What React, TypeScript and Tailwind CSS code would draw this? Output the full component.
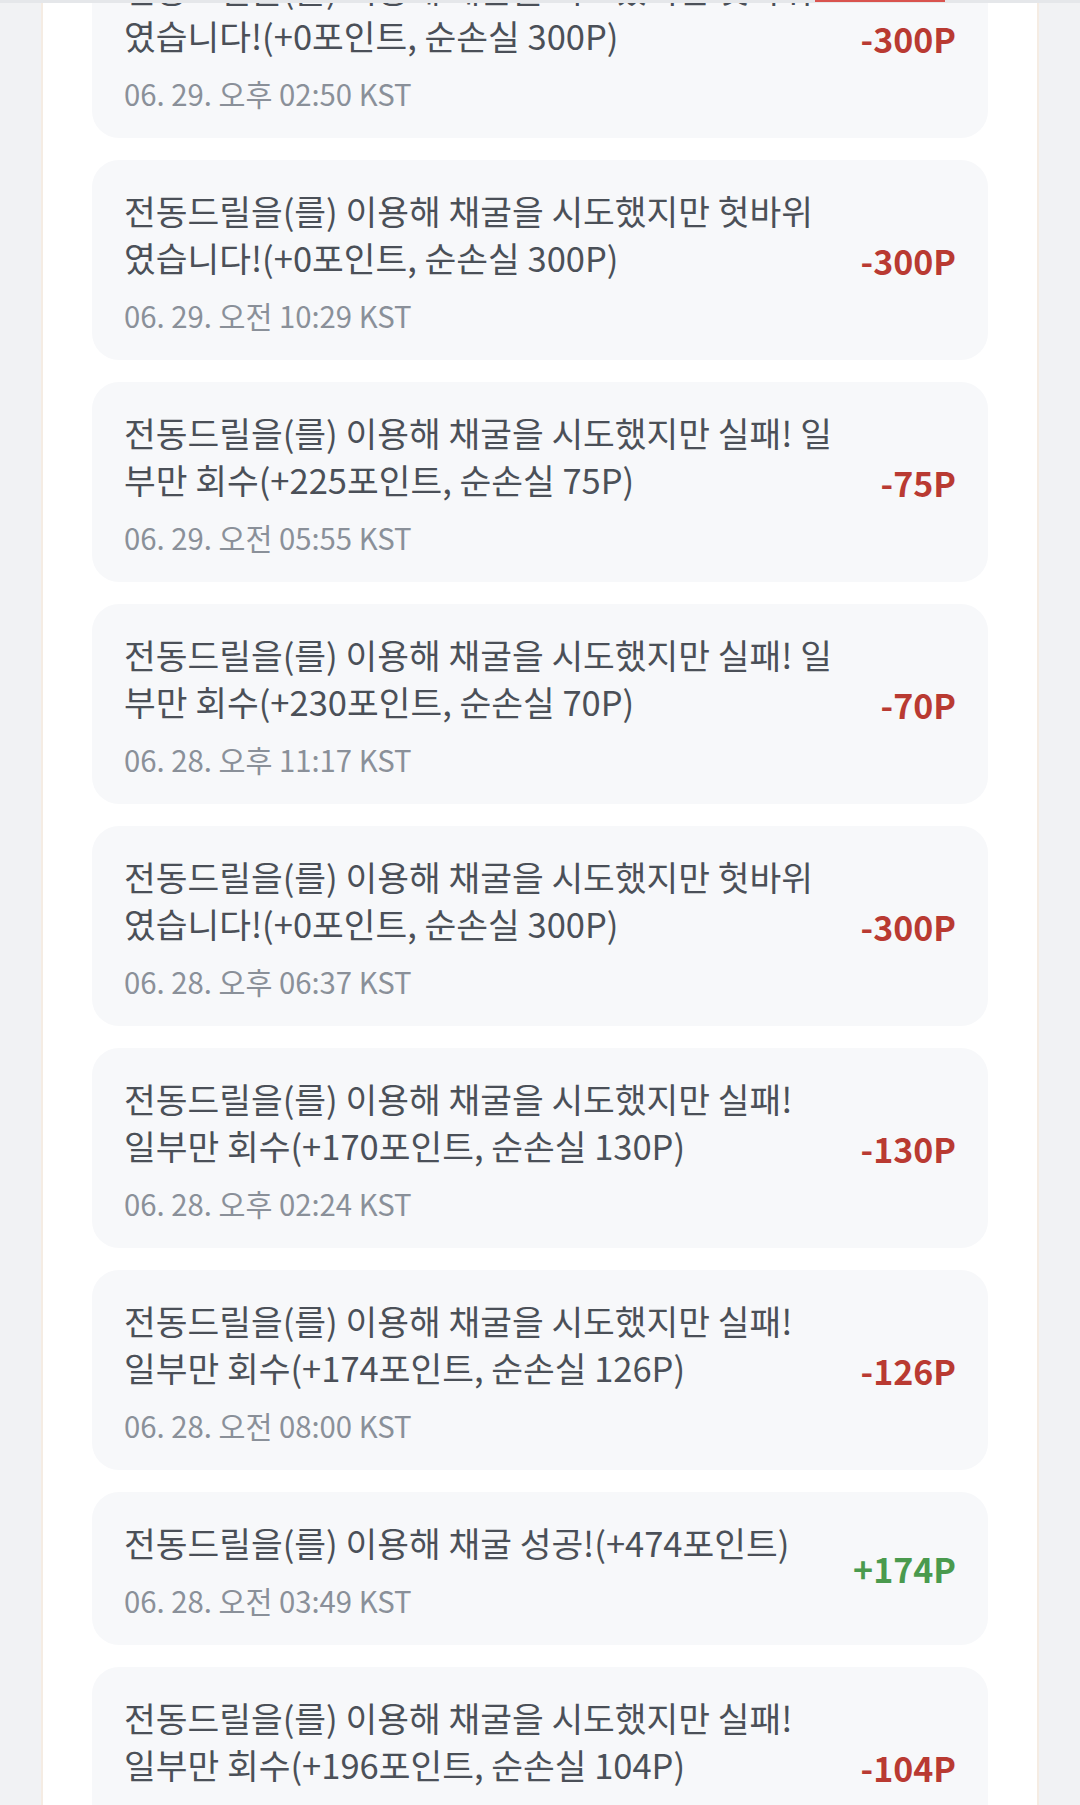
import React from "react";

type Item = { lines: string[]; date: string; amount: string; positive?: boolean };

const items: Item[] = [
  {
    lines: ["전동드릴을(를) 이용해 채굴을 시도했지만 헛바위", "였습니다!(+0포인트, 순손실 300P)"],
    date: "06. 29. 오후 02:50 KST",
    amount: "-300P",
  },
  {
    lines: ["전동드릴을(를) 이용해 채굴을 시도했지만 헛바위", "였습니다!(+0포인트, 순손실 300P)"],
    date: "06. 29. 오전 10:29 KST",
    amount: "-300P",
  },
  {
    lines: ["전동드릴을(를) 이용해 채굴을 시도했지만 실패! 일", "부만 회수(+225포인트, 순손실 75P)"],
    date: "06. 29. 오전 05:55 KST",
    amount: "-75P",
  },
  {
    lines: ["전동드릴을(를) 이용해 채굴을 시도했지만 실패! 일", "부만 회수(+230포인트, 순손실 70P)"],
    date: "06. 28. 오후 11:17 KST",
    amount: "-70P",
  },
  {
    lines: ["전동드릴을(를) 이용해 채굴을 시도했지만 헛바위", "였습니다!(+0포인트, 순손실 300P)"],
    date: "06. 28. 오후 06:37 KST",
    amount: "-300P",
  },
  {
    lines: ["전동드릴을(를) 이용해 채굴을 시도했지만 실패!", "일부만 회수(+170포인트, 순손실 130P)"],
    date: "06. 28. 오후 02:24 KST",
    amount: "-130P",
  },
  {
    lines: ["전동드릴을(를) 이용해 채굴을 시도했지만 실패!", "일부만 회수(+174포인트, 순손실 126P)"],
    date: "06. 28. 오전 08:00 KST",
    amount: "-126P",
  },
  {
    lines: ["전동드릴을(를) 이용해 채굴 성공!(+474포인트)"],
    date: "06. 28. 오전 03:49 KST",
    amount: "+174P",
    positive: true,
  },
  {
    lines: ["전동드릴을(를) 이용해 채굴을 시도했지만 실패!", "일부만 회수(+196포인트, 순손실 104P)"],
    date: "06. 28. 오전 01:12 KST",
    amount: "-104P",
  },
];

function Card({ item }: { item: Item }) {
  return (
    <div className="flex shrink-0 items-center justify-between gap-6 rounded-[27px] bg-[#f7f8fa] pl-8 pr-8 pt-[27px] pb-[26px]">
      <div className="min-w-0 flex-1">
        <div className="text-[34.5px] leading-[47px] text-[#4b5058]">
          {item.lines.map((l, i) => (
            <div key={i} className="whitespace-nowrap">
              {l}
            </div>
          ))}
        </div>
        <div className="mt-[15px] whitespace-nowrap text-[29.3px] leading-[38px] text-[#8a9099]">{item.date}</div>
      </div>
      <div
        className={
          item.positive
            ? "shrink-0 text-[34px] font-bold leading-[40px] text-[#4a9a4e]"
            : "shrink-0 text-[34px] font-bold leading-[40px] text-[#b93a32]"
        }
      >
        {item.amount}
      </div>
    </div>
  );
}

export default function App() {
  return (
    <div
      className="relative h-[1805px] w-[1080px] overflow-hidden bg-[#f1f2f4]"
      style={{ fontFamily: '"Noto Sans CJK KR", "Noto Sans", sans-serif' }}
    >
      <div className="mx-[41px] flex h-full flex-col border-x-2 border-[#f5ece3] bg-white px-[49px]">
        <div className="mt-[-62px] flex flex-col gap-[22px]">
          {items.map((it, i) => (
            <Card key={i} item={it} />
          ))}
        </div>
      </div>
      <div className="absolute left-0 right-0 top-0 h-[3px] bg-[#e5e7ea]" />
      <div className="absolute left-[815px] top-0 h-[2px] w-[130px] bg-[#d9534f]" />
    </div>
  );
}
